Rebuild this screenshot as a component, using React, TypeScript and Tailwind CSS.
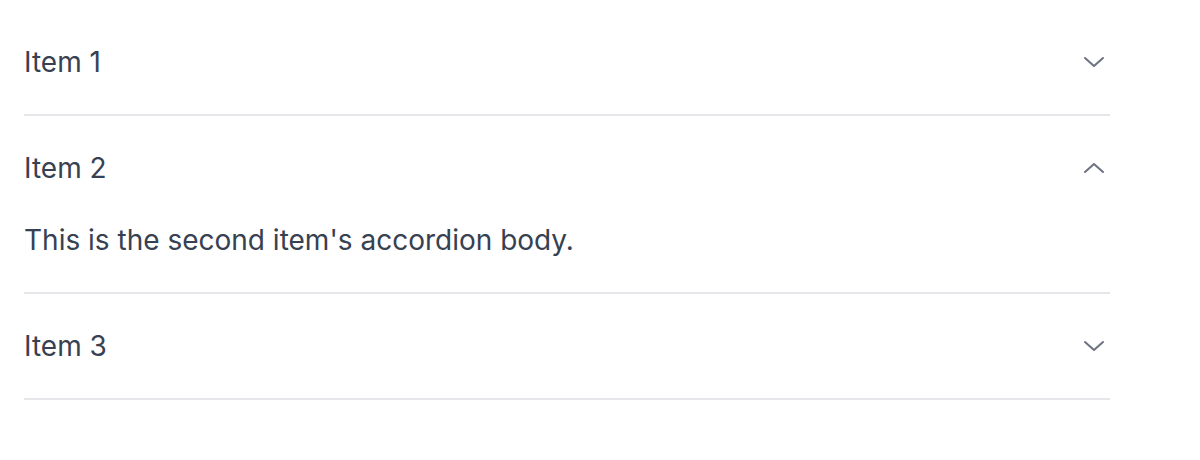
import { useState } from 'react';

interface Item {
  id: string;
  title: string;
  body: string;
}

const items: Item[] = [
  { id: 'one', title: 'Item 1', body: "This is the first item's accordion body." },
  { id: 'two', title: 'Item 2', body: "This is the second item's accordion body." },
  { id: 'three', title: 'Item 3', body: "This is the third item's accordion body." },
];

function Chevron({ open }: { open: boolean }) {
  return (
    <svg
      width="22"
      height="12"
      viewBox="0 0 22 12"
      fill="none"
      stroke="#6b7280"
      strokeWidth="2"
      strokeLinecap="round"
      strokeLinejoin="round"
      className={open ? 'rotate-180' : ''}
    >
      <path d="M2 2l9 8 9-8" />
    </svg>
  );
}

export default function App() {
  const [openId, setOpenId] = useState<string | null>('two');

  return (
    <div className="min-h-screen bg-white pt-[10px] font-['Inter',sans-serif] text-[#374151]">
      <div className="w-[1086px] ml-6">
        {items.map(item => {
          const open = openId === item.id;
          return (
            <div key={item.id} className="border-b-2 border-[#e5e7eb]">
              <button
                type="button"
                onClick={() => setOpenId(open ? null : item.id)}
                className="flex h-[104px] w-full items-center justify-between text-left"
              >
                <span className="text-[28px] leading-10">{item.title}</span>
                <span className="mr-[5px] flex items-center">
                  <Chevron open={open} />
                </span>
              </button>
              {open && (
                <div className="pb-[32px] text-[28px] leading-10">{item.body}</div>
              )}
            </div>
          );
        })}
      </div>
    </div>
  );
}
